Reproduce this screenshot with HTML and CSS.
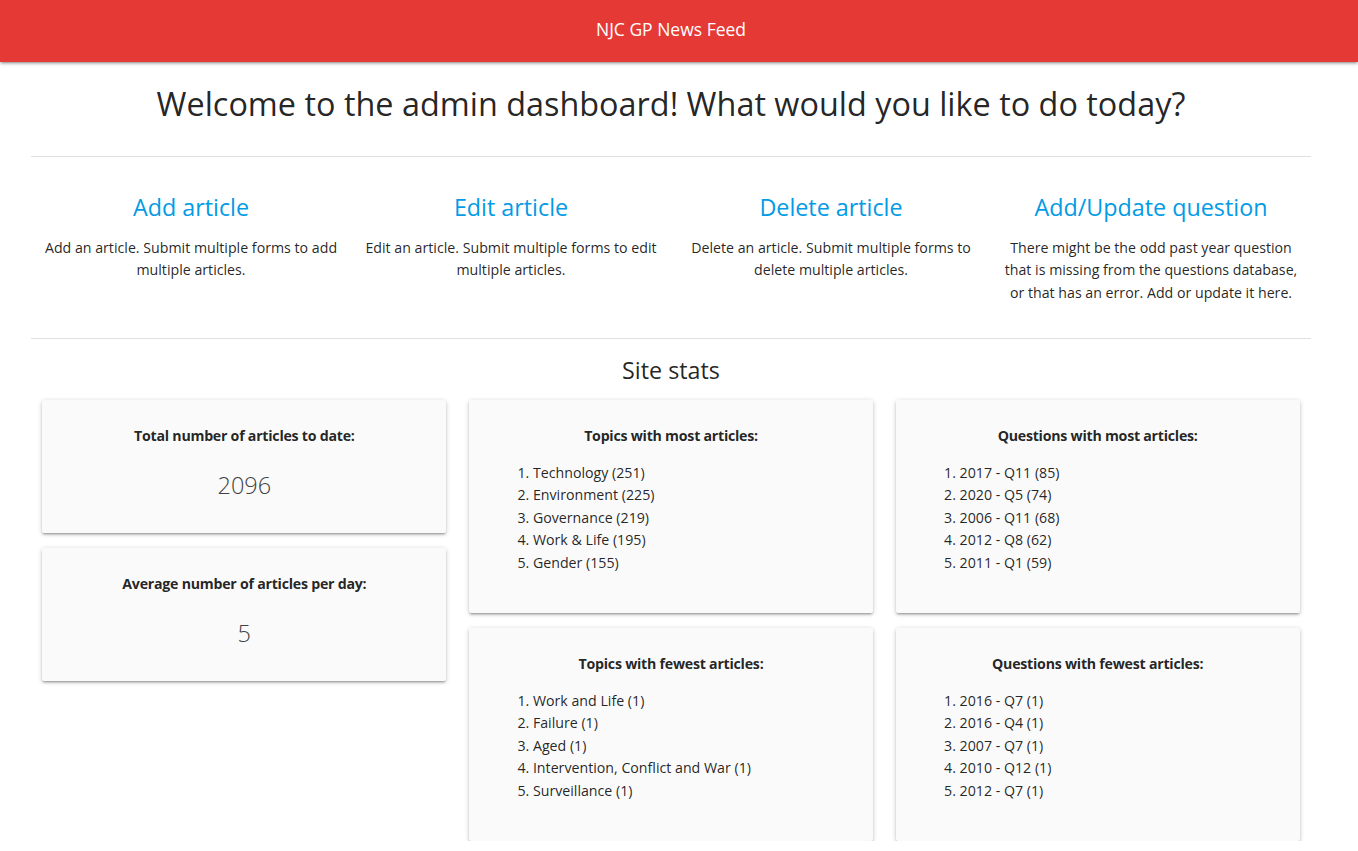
FILE: index.html
```html
<!DOCTYPE html>
<html lang="en">
<head>
<meta charset="utf-8">
<title>NJC GP News Feed - Admin</title>
<link rel="stylesheet" href="styles.css">
</head>
<body>
<header class="topbar">
  <div class="topbar-inner">NJC GP News Feed</div>
</header>
<main class="container">
  <h1 class="welcome">Welcome to the admin dashboard! What would you like to do today?</h1>
  <hr class="divider">
  <section class="actions">
    <div class="action">
      <a class="action-title" href="#">Add article</a>
      <p class="action-desc">Add an article. Submit multiple forms to add multiple articles.</p>
    </div>
    <div class="action">
      <a class="action-title" href="#">Edit article</a>
      <p class="action-desc">Edit an article. Submit multiple forms to edit multiple articles.</p>
    </div>
    <div class="action">
      <a class="action-title" href="#">Delete article</a>
      <p class="action-desc">Delete an article. Submit multiple forms to delete multiple articles.</p>
    </div>
    <div class="action">
      <a class="action-title" href="#">Add/Update question</a>
      <p class="action-desc">There might be the odd past year question that is missing from the questions database, or that has an error. Add or update it here.</p>
    </div>
  </section>
  <hr class="divider">
  <h2 class="stats-title">Site stats</h2>
  <section class="stats">
    <div class="stats-col">
      <div class="card">
        <p class="card-title">Total number of articles to date:</p>
        <p class="card-value">2096</p>
      </div>
      <div class="card">
        <p class="card-title">Average number of articles per day:</p>
        <p class="card-value">5</p>
      </div>
    </div>
    <div class="stats-col">
      <div class="card">
        <p class="card-title">Topics with most articles:</p>
        <ol class="card-list">
          <li>Technology (251)</li>
          <li>Environment (225)</li>
          <li>Governance (219)</li>
          <li>Work &amp; Life (195)</li>
          <li>Gender (155)</li>
        </ol>
      </div>
      <div class="card">
        <p class="card-title">Topics with fewest articles:</p>
        <ol class="card-list">
          <li>Work and Life (1)</li>
          <li>Failure (1)</li>
          <li>Aged (1)</li>
          <li>Intervention, Conflict and War (1)</li>
          <li>Surveillance (1)</li>
        </ol>
      </div>
    </div>
    <div class="stats-col">
      <div class="card">
        <p class="card-title">Questions with most articles:</p>
        <ol class="card-list">
          <li>2017 - Q11 (85)</li>
          <li>2020 - Q5 (74)</li>
          <li>2006 - Q11 (68)</li>
          <li>2012 - Q8 (62)</li>
          <li>2011 - Q1 (59)</li>
        </ol>
      </div>
      <div class="card">
        <p class="card-title">Questions with fewest articles:</p>
        <ol class="card-list">
          <li>2016 - Q7 (1)</li>
          <li>2016 - Q4 (1)</li>
          <li>2007 - Q7 (1)</li>
          <li>2010 - Q12 (1)</li>
          <li>2012 - Q7 (1)</li>
        </ol>
      </div>
    </div>
  </section>
</main>
</body>
</html>
```
FILE: styles.css
```css
* { box-sizing: border-box; }

html, body {
  margin: 0;
  padding: 0;
  background: #ffffff;
}

body {
  font-family: "Open Sans", "Noto Sans", "Liberation Sans", sans-serif;
  font-size: 14.2px;
  line-height: 22.5px;
  color: rgba(0, 0, 0, 0.87);
}

.topbar {
  height: 62px;
  background: #e53935;
  box-shadow: 0 2px 2px 0 rgba(0,0,0,0.14), 0 3px 1px -2px rgba(0,0,0,0.12), 0 1px 5px 0 rgba(0,0,0,0.2);
  display: flex;
  align-items: center;
  padding-bottom: 4px;
}

.topbar-inner {
  width: 1280px;
  margin-left: 31px;
  text-align: center;
  color: #ffffff;
  font-size: 17.5px;
}

.container {
  width: 1280px;
  margin-left: 31px;
}

.welcome {
  margin: 23px 0 33px;
  font-size: 32.4px;
  line-height: 37.6px;
  font-weight: 400;
  text-align: center;
  color: rgba(0, 0, 0, 0.87);
}

.divider {
  border: none;
  height: 1px;
  margin: 0;
  background: #e0e0e0;
}

.actions {
  display: grid;
  grid-template-columns: repeat(4, 1fr);
  padding: 37px 0 34px;
}

.action {
  padding: 0 11.25px;
  text-align: center;
}

.action-title {
  display: block;
  font-size: 23.3px;
  line-height: 27px;
  color: #039be5;
  text-decoration: none;
}

.action-desc {
  margin: 16px 0 0;
}

.stats-title {
  margin: 17.5px 0 16.5px;
  font-size: 23.3px;
  line-height: 27px;
  font-weight: 400;
  text-align: center;
}

.stats {
  display: grid;
  grid-template-columns: repeat(3, 1fr);
}

.stats-col {
  padding: 0 11.25px;
  display: flex;
  flex-direction: column;
  gap: 15px;
  align-items: stretch;
}

.card {
  background: #fafafa;
  border-radius: 2px;
  padding: 25px 24px 23px;
  box-shadow: 0 2px 2px 0 rgba(0,0,0,0.14), 0 3px 1px -2px rgba(0,0,0,0.12), 0 1px 5px 0 rgba(0,0,0,0.2);
}

.card-title {
  margin: 0;
  text-align: center;
  font-weight: 700;
  letter-spacing: -0.25px;
}

.card-value {
  margin: 23.5px 0 11px;
  text-align: center;
  font-size: 23.5px;
  line-height: 28px;
  font-weight: 300;
  color: #424242;
}

.card-list {
  margin: 14px 0 16px;
  padding-left: 40px;
}
```
